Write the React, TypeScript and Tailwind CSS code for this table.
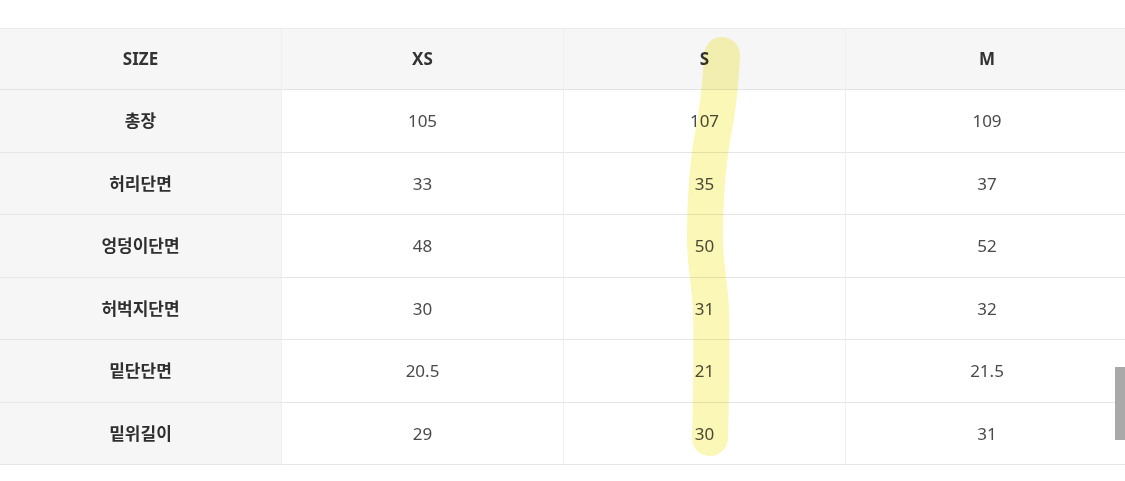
const COLUMNS = ["SIZE", "XS", "S", "M"]

const ROWS: [string, string, string, string][] = [
  ["총장", "105", "107", "109"],
  ["허리단면", "33", "35", "37"],
  ["엉덩이단면", "48", "50", "52"],
  ["허벅지단면", "30", "31", "32"],
  ["밑단단면", "20.5", "21", "21.5"],
  ["밑위길이", "29", "30", "31"],
]

const ROW_HEIGHTS = ["h-[63px]", "h-[62px]", "h-[63px]", "h-[62px]", "h-[63px]", "h-[62px]"]

export default function App() {
  return (
    <div
      className="relative w-[1125px] h-[481px] overflow-hidden bg-white"
      style={{ fontFamily: '"Noto Sans", "Noto Sans CJK KR", sans-serif' }}
    >
      <div className="pt-[28px]">
        {/* 헤더 */}
        <div className="grid grid-cols-[282px_282px_282px_282px] h-[62px] bg-[#f6f6f6] border-t border-[#ebebeb]">
          {COLUMNS.map((c, i) => (
            <div
              key={c}
              className={`flex items-center justify-center text-[17px] font-bold text-[#333] border-b border-[#e3e3e3] ${
                i < 3 ? "border-r border-r-[#efefef]" : ""
              }`}
            >
              {c}
            </div>
          ))}
        </div>

        {/* 본문 */}
        {ROWS.map((row, r) => (
          <div key={row[0]} className={`grid grid-cols-[282px_282px_282px_282px] ${ROW_HEIGHTS[r]}`}>
            {row.map((v, i) => (
              <div
                key={i}
                className={`flex items-center justify-center border-b border-[#e6e6e6] ${
                  i === 0
                    ? "bg-[#f6f6f6] text-[17px] font-bold text-[#2f2f2f]"
                    : "bg-white text-[17px] text-[#4a4a4a]"
                } ${i < 3 ? "border-r border-r-[#efefef]" : ""}`}
              >
                {v}
              </div>
            ))}
          </div>
        ))}
      </div>

      {/* 형광펜 표시 */}
      <svg
        className="absolute left-0 top-0 pointer-events-none mix-blend-multiply"
        width="1125"
        height="481"
        viewBox="0 0 1125 481"
      >
        <path
          d="M722 55 C721 80 718 110 712 140 C707 170 705 210 705 240 C705 265 710 285 711 310 C712 350 711 400 710 438"
          fill="none"
          stroke="#fbf7b6"
          strokeWidth="36"
          strokeLinecap="round"
          strokeLinejoin="round"
        />
      </svg>

      {/* 스크롤바 */}
      <div className="absolute left-[1115px] top-[367px] w-[10px] h-[73px] bg-[#a9a9a9]" />
    </div>
  )
}
